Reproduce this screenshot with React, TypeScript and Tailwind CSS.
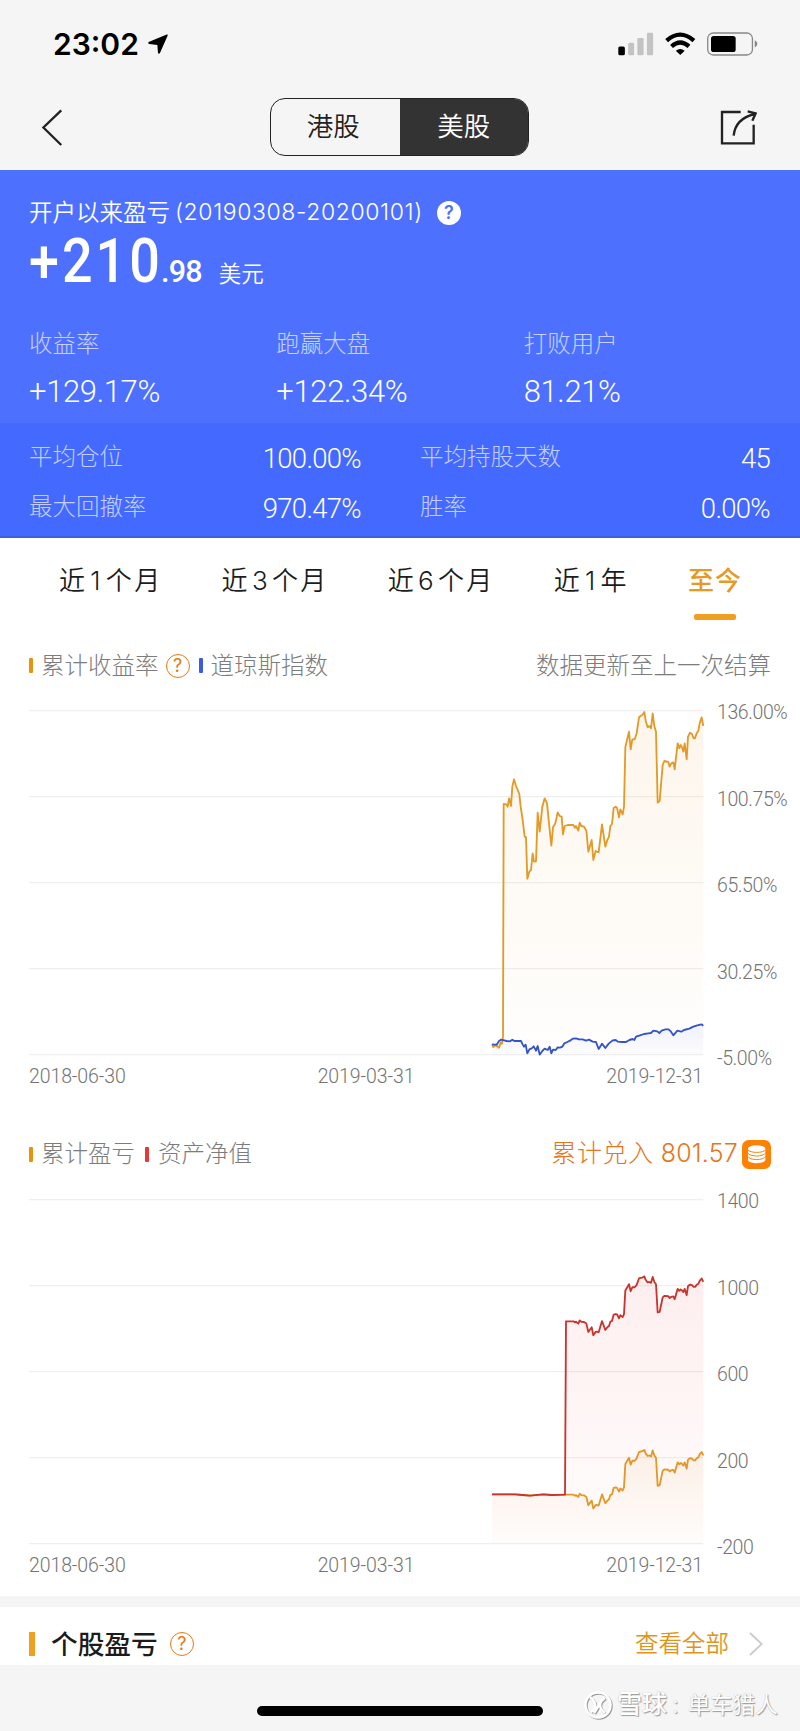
import type { ReactNode } from "react";

type Point = [number, number];

const summary = [
  { label: "收益率", value: "+129.17%" },
  { label: "跑赢大盘", value: "+122.34%" },
  { label: "打败用户", value: "81.21%" },
];

const details = [
  { label: "平均仓位", value: "100.00%" },
  { label: "平均持股天数", value: "45" },
  { label: "最大回撤率", value: "970.47%" },
  { label: "胜率", value: "0.00%" },
];

const dates = ["2018-06-30", "2019-03-31", "2019-12-31"];

const returns: Point[] = [
  [36, 1063], [40, 1071], [46, 1066], [52, 1069], [57, 1073], [62, 1058], [66, 1061], [69, 1040], [71, 342],
  [79, 343], [83, 350], [87, 325], [93, 348], [97, 290], [102, 268], [108, 288], [118, 312], [122, 350],
  [128, 390], [134, 440], [138, 442], [142, 566], [148, 545], [153, 540], [158, 490], [162, 515], [168, 514],
  [173, 368], [179, 425], [187, 350], [194, 325], [201, 340], [208, 410], [214, 467], [219, 412], [226, 400],
  [233, 367], [239, 378], [245, 380], [249, 433], [254, 408], [263, 405], [280, 405], [285, 413], [288, 408],
  [295, 422], [299, 398], [304, 408], [312, 410], [319, 422], [325, 485], [335, 450], [340, 510], [347, 483],
  [356, 487], [366, 403], [376, 470], [382, 450], [387, 440], [391, 408], [396, 402], [401, 354], [407, 350],
  [411, 353], [417, 382], [421, 358], [428, 373], [432, 350], [436, 172], [447, 125], [452, 178], [457, 148],
  [464, 148], [470, 130], [477, 82], [482, 78], [487, 75], [493, 66], [497, 92], [503, 112], [508, 108],
  [513, 115], [518, 70], [523, 108], [528, 125], [533, 338], [539, 333], [548, 225], [553, 213], [565, 216],
  [569, 230], [574, 220], [580, 217], [584, 238], [593, 160], [598, 175], [602, 165], [606, 172], [610, 185],
  [614, 160], [620, 208], [624, 140], [630, 128], [636, 132], [641, 145], [645, 145], [650, 130], [655, 122],
  [659, 100], [665, 82], [670, 108],
];

const dowJones: Point[] = [
  [36, 1063], [44, 1064], [50, 1064], [57, 1053], [64, 1049], [72, 1051], [80, 1053], [90, 1054], [97, 1049],
  [103, 1053], [110, 1053], [123, 1053], [128, 1063], [132, 1070], [137, 1064], [142, 1090], [148, 1078],
  [155, 1075], [161, 1069], [168, 1082], [173, 1068], [179, 1094], [187, 1083], [194, 1076], [203, 1080],
  [209, 1070], [214, 1090], [219, 1079], [227, 1080], [233, 1072], [240, 1073], [247, 1070], [253, 1060],
  [262, 1056], [270, 1052], [278, 1046], [288, 1045], [297, 1048], [308, 1048], [318, 1052], [327, 1049],
  [338, 1055], [348, 1056], [356, 1077], [366, 1061], [376, 1074], [386, 1061], [398, 1051], [407, 1050],
  [414, 1055], [425, 1056], [438, 1056], [448, 1050], [458, 1047], [463, 1050], [468, 1040], [480, 1036],
  [492, 1032], [505, 1030], [513, 1029], [520, 1022], [532, 1024], [538, 1029], [545, 1022], [556, 1018],
  [566, 1018], [573, 1025], [580, 1036], [592, 1022], [604, 1025], [612, 1020], [628, 1016], [640, 1010],
  [652, 1006], [664, 1003], [670, 1007],
];

// both asset curves follow the return curve after the deposit
const recent = returns.filter(([x]) => x >= 258);

const flat: Point[] = [
  [36, 1123], [105, 1123], [128, 1125], [150, 1127], [190, 1123], [215, 1125], [255, 1124],
];

const profit: Point[] = [...flat, ...recent.map(([x, y]): Point => [x, 1124 + (y - 405) * 0.396])];
const netAssets: Point[] = [...flat, [258, 604], ...recent.map(([x, y]): Point => [x, 604 + (y - 405) * 0.398])];

function Question({ className }: { className: string }) {
  return (
    <span className={`flex h-6 w-6 items-center justify-center rounded-full text-lg leading-none ${className}`}>
      ?
    </span>
  );
}

function Marker({ className }: { className: string }) {
  return <span className={`h-[15px] w-1 rounded-[1px] ${className}`} />;
}

function Series({ id, points, color, fill, bottom, opacity }: {
  id: string;
  points: Point[];
  color: string;
  fill: string;
  bottom: number;
  opacity: number;
}) {
  const line = points.map((p) => p.join(",")).join(" ");
  const top = Math.min(...points.map((p) => p[1]));

  return (
    <>
      <defs>
        <linearGradient id={id} gradientUnits="userSpaceOnUse" x1="0" x2="0" y1={top} y2={bottom}>
          <stop offset="0" stopColor={fill} stopOpacity={opacity} />
          <stop offset="1" stopColor={fill} stopOpacity="0.01" />
        </linearGradient>
      </defs>
      <polygon points={`${points[0][0]},${bottom} ${line} 670,${bottom}`} fill={`url(#${id})`} />
      <polyline points={line} fill="none" stroke={color} strokeWidth="5.5" strokeLinejoin="round" />
    </>
  );
}

function Chart({ top, labels, children }: { top: number; labels: string[]; children: ReactNode }) {
  return (
    <div className="pl-[29px] font-['Roboto',sans-serif] text-[19.5px] font-light text-[#747474]">
      <div className="flex">
        <svg viewBox={`-1353 ${top} 2025 1041`} className="mt-[10px] h-[347px] w-[675px]">
          {labels.map((label, i) => (
            <line key={label} x1="-1353" x2="670" y1={top + 2 + i * 258} y2={top + 2 + i * 258} stroke="#efefef" strokeWidth="3.5" />
          ))}
          {children}
        </svg>
        <div className="ml-[13px] flex h-[368px] flex-col justify-between">
          {labels.map((label) => (
            <span key={label} className="h-[22px] leading-[25px] tracking-[-0.4px]">{label}</span>
          ))}
        </div>
      </div>
      <div className="flex h-[18px] w-[674px] items-center justify-between tracking-[-0.1px]">
        {dates.map((date) => (
          <span key={date}>{date}</span>
        ))}
      </div>
    </div>
  );
}

function Tab({ count, unit }: { count: number; unit: string }) {
  return (
    <span>
      近<span className={count === 1 ? "mx-[3px]" : "mx-[2px]"}>{count}</span>{unit}
    </span>
  );
}

function StatusBar() {
  return (
    <div className="flex h-[88px] items-center justify-between pr-[41px] pl-[53px]">
      <div className="flex items-center">
        <span className="text-[30px] font-semibold text-black">23:02</span>
        <svg viewBox="438 96 68 68" className="ml-2 h-[22px] w-[22px]">
          <path d="M443 124 499 101q4-1 3 3L478 158q-3 4-6 0L470 133 445 130q-6-2-2-6z" fill="#000" />
        </svg>
      </div>
      <svg viewBox="648 94 430 73" className="h-[24px] w-[142px]">
        <rect x="651" y="138" width="20" height="27" rx="5" fill="#000" />
        <rect x="681" y="127" width="18" height="38" rx="4" fill="#c3c3c3" />
        <rect x="709" y="112" width="19" height="53" rx="4" fill="#c3c3c3" />
        <rect x="738" y="96" width="19" height="69" rx="4" fill="#c3c3c3" />
        <g fill="none" stroke="#000" strokeWidth="13">
          <path d="M798 120Q839 84 881 120" />
          <path d="M813 138Q839 114 866 138" />
        </g>
        <path d="M826 151q13-11 27 0L839.5 164z" fill="#000" />
        <rect x="923" y="97" width="136" height="67" rx="17" fill="none" stroke="#888" strokeWidth="4" />
        <rect x="933" y="106" width="75" height="49" rx="8" fill="#000" />
        <path d="M1066 119q8 4 8 11t-8 11z" fill="#888" />
      </svg>
    </div>
  );
}

export default function App() {
  return (
    <div className="w-[800px] bg-white font-['Inter','Noto_Sans_CJK_SC',sans-serif] text-[23.5px] font-light whitespace-nowrap">
      <header className="h-[170px] bg-[#f5f5f5]">
        <StatusBar />
        <nav className="flex items-center justify-between pt-[10px] pr-[43px] pl-[41px]">
          <svg viewBox="122 322 66 118" className="h-[39px] w-[22px]">
            <path d="M183 329 129 381 183 434" fill="none" stroke="#222" strokeWidth="7" />
          </svg>
          <div className="ml-[16px] flex h-[58px] w-[259px] overflow-hidden rounded-[15px] border-[1.5px] border-[#222] text-[26.5px] leading-[55px] font-[350]">
            <span className="w-1/2 pr-1 text-center text-[#222]">港股</span>
            <span className="w-1/2 bg-[#333] text-center text-white">美股</span>
          </div>
          <svg viewBox="960 328 111 111" className="h-[37px] w-[37px]" fill="none" stroke="#222" strokeWidth="7">
            <path d="M1022 337H966V431H1061V375" />
            <path d="M1001 408Q1006 357 1064 343M1043 335 1067 341 1057 363" />
          </svg>
        </nav>
      </header>

      <section className="h-[253px] bg-[#4e70ff] px-[29px] pt-[25px] text-white">
        <div className="flex h-[35px] items-center font-[350]">
          <span>开户以来盈亏</span>
          <span className="ml-[5px] text-[23px] tracking-[0.6px]">(20190308-20200101)</span>
          <Question className="ml-[14px] bg-white font-semibold text-[#4e70ff]" />
        </div>
        <div className="flex h-[62px] items-baseline font-['Roboto','Noto_Sans_CJK_SC',sans-serif] leading-[62px]">
          <span className="w-[132px] origin-left scale-x-[0.87] text-[62px] font-medium tracking-[3.4px]">+210</span>
          <span className="text-[30.5px] font-medium tracking-[-0.8px]">.98</span>
          <span className="ml-[17px] text-[22.5px] font-[350]">美元</span>
        </div>
        <div className="mt-[34px] grid grid-cols-3">
          {summary.map((item) => (
            <div key={item.label}>
              <div className="h-[35px] leading-[35px] text-[#c6d1ff]">{item.label}</div>
              <div className="mt-[10px] font-['Roboto',sans-serif] text-[31px] leading-[41px] tracking-[-0.35px]">{item.value}</div>
            </div>
          ))}
        </div>
      </section>

      <section className="grid h-[115px] grid-cols-[332px_350px] content-start gap-x-[59px] border-b-2 border-[#3f5fe0] bg-[#4469ff] px-[29px] pt-[9px] text-white">
        {details.map((item) => (
          <div key={item.label} className="flex h-[50px] items-center justify-between">
            <span className="text-[#c2ceff]">{item.label}</span>
            <span className="pt-[4px] font-['Roboto',sans-serif] text-[27.5px] tracking-[-0.7px]">{item.value}</span>
          </div>
        ))}
      </section>

      <nav className="flex h-[87px] justify-between pt-[23px] pr-[58px] pl-[59px] text-[26px] leading-[40px] font-[350] tracking-[2.3px] text-[#1c1c1c]">
        <Tab count={1} unit="个月" />
        <Tab count={3} unit="个月" />
        <Tab count={6} unit="个月" />
        <Tab count={1} unit="年" />
        <span className="flex flex-col items-center font-medium tracking-[1px] text-[#e69a23]">
          至今
          <i className="mt-[13px] h-[6px] w-[42px] rounded-[2px] bg-[#f0a020]" />
        </span>
      </nav>

      <section className="h-[489px]">
        <div className="flex h-[75px] items-center justify-between pt-[6px] pr-[29px] pl-[29px] text-[#7c7c7c]">
          <div className="flex items-center">
            <Marker className="bg-[#e8930c]" />
            <span className="ml-2">累计收益率</span>
            <Question className="mr-[9px] ml-[7px] border border-[#e6790f] font-normal text-[#e6790f]" />
            <Marker className="bg-[#3b5be0]" />
            <span className="ml-2">道琼斯指数</span>
          </div>
          <span>数据更新至上一次结算</span>
        </div>
        <Chart top={60} labels={["136.00%", "100.75%", "65.50%", "30.25%", "-5.00%"]}>
          <Series id="returns" points={returns} color="#e39a26" fill="#e8952c" bottom={1094} opacity={0.09} />
          <Series id="dow" points={dowJones} color="#3553c8" fill="#4469ff" bottom={1094} opacity={0.08} />
        </Chart>
      </section>

      <section className="h-[482px]">
        <div className="flex h-[75px] items-center justify-between pt-[5px] pr-[29px] pl-[29px] text-[#7c7c7c]">
          <div className="flex items-center">
            <Marker className="bg-[#e8930c]" />
            <span className="ml-2">累计盈亏</span>
            <Marker className="ml-[10px] bg-[#e53935]" />
            <span className="ml-[9px]">资产净值</span>
          </div>
          <div className="flex items-center text-[25px] text-[#e6761a]">
            <span className="mr-[7px] tracking-[0.6px]">累计兑入</span>
            <span className="tracking-[0.2px]">801.57</span>
            <svg viewBox="0 0 87 87" className="ml-1 h-[29px] w-[29px]">
              <rect width="87" height="87" rx="20" fill="#fd8204" />
              <path d="M18 26V60C22 73 66 73 70 60V26z" fill="#fff" />
              <ellipse cx="44" cy="25" rx="26" ry="9" fill="#fff" />
              <path d="M17 29C24 40 64 40 71 29M17 39C24 51 64 51 71 39M17 49C24 62 64 62 71 49" fill="none" stroke="#fd8204" strokeWidth="3" />
            </svg>
          </div>
        </div>
        <Chart top={237} labels={["1400", "1000", "600", "200", "-200"]}>
          <Series id="profit" points={profit} color="#e39a26" fill="#e8952c" bottom={1271} opacity={0.09} />
          <Series id="assets" points={netAssets} color="#c9342f" fill="#f04444" bottom={1271} opacity={0.09} />
        </Chart>
      </section>

      <div className="h-[11px] bg-[#f5f5f5]" />

      <section className="flex h-[58px] items-center justify-between pt-4 pr-[37px] pl-[29px]">
        <div className="flex items-center">
          <span className="h-6 w-[6px] bg-[#f0a020]" />
          <h2 className="ml-4 text-[26.7px] leading-[42px] font-medium text-[#1c1c1c]">个股盈亏</h2>
          <Question className="ml-3 border border-[#e6790f] font-normal text-[#e6790f]" />
        </div>
        <div className="flex items-center font-[350] text-[#e0941c]">
          查看全部
          <svg viewBox="0 0 42 72" className="ml-5 h-6 w-[14px]">
            <path d="M3 3 38 36 3 69" fill="none" stroke="#ccc" strokeWidth="6" />
          </svg>
        </div>
      </section>

      <footer className="flex h-[66px] bg-[#f5f5f5] pl-[257px]">
        <div className="mt-[41px] h-[10px] w-[286px] rounded-full bg-black" />
        <div className="mt-[21px] ml-[40px] flex h-[38px] items-center text-white [text-shadow:1px_1px_1px_#999,0_0_1px_#aaa]">
          <svg viewBox="0 0 30 30" className="h-[30px] w-[30px] [filter:drop-shadow(1px_1px_0.5px_#999)]" fill="none" stroke="#fff" strokeWidth="2.5">
            <circle cx="15" cy="15" r="12.5" />
            <path d="M7 7Q17 15 8 22M22 8Q12 15 22 23M11 23 21 7" />
          </svg>
          <span className="ml-1 text-[25px] font-medium">雪球</span>
          <span className="mx-[5px]">:</span>
          <span className="ml-1 text-[22.5px] font-normal">单车猎人</span>
        </div>
      </footer>
    </div>
  );
}
